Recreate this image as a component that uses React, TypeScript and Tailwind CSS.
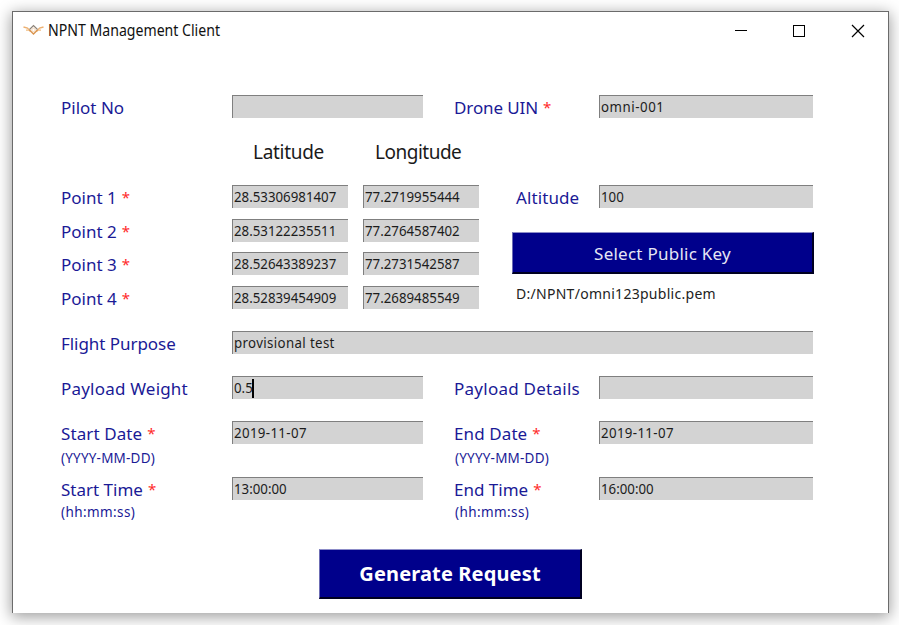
import React from "react";

function Label({ text, required, className = "" }: { text: string; required?: boolean; className?: string }) {
  return (
    <div className={`flex h-[23px] shrink-0 whitespace-pre pt-[2px] text-[17px] leading-[22px] text-[#1a1a96] ${className}`}>
      <span>{text}</span>
      {required && <span className="ml-[5px] mt-[-1px] text-[15px] text-[#ff2a2a]">*</span>}
    </div>
  );
}

function Field({ value, className = "", caret }: { value?: string; className?: string; caret?: boolean }) {
  return (
    <div
      className={`flex h-[23px] shrink-0 items-center border-l border-t border-[#7f7f7f] bg-[#d3d3d3] pb-[2px] pl-px text-[15px] leading-[20px] text-[#1c1c1c] ${className}`}
    >
      <span className="origin-left scale-x-[0.885] whitespace-pre">{value}</span>
      {caret && <span className="-ml-[3px] mt-[2px] h-[19px] w-[2px] bg-black" />}
    </div>
  );
}

function Hint({ text, className = "" }: { text: string; className?: string }) {
  return <div className={`shrink-0 whitespace-pre text-[13.5px] leading-[18px] text-[#1a1a96] ${className}`}>{text}</div>;
}

const points = [
  ["Point 1", "28.53306981407", "77.2719955444"],
  ["Point 2", "28.53122235511", "77.2764587402"],
  ["Point 3", "28.52643389237", "77.2731542587"],
  ["Point 4", "28.52839454909", "77.2689485549"],
];

export default function App() {
  return (
    <div className="h-[625px] w-[899px] overflow-hidden bg-white pl-[12px] pt-[11px] font-['Noto_Sans','Open_Sans',sans-serif]">
      <div className="flex h-[602px] w-[877px] flex-col border-x border-t border-[#6b6b6b] bg-white shadow-[0_3px_14px_1px_rgba(0,0,0,0.38)]">
        <header className="flex h-[37px] items-center">
          <svg className="ml-[10px] mt-[-2px] h-[12px] w-[21px]" viewBox="0 0 21 12" fill="none">
            <path d="M.5 3 L4.5 4 L7.5 7.5 M20.5 3 L16.5 4 L13.5 7.5" stroke="#edb070" strokeWidth="1.3" />
            <path d="M3 6.2 H6.5 M18 6.2 H14.5" stroke="#f0bd84" strokeWidth="1.2" />
            <path d="M6.5 5.5 L10.5 1.5 L14.5 5.5" stroke="#8d8378" strokeWidth="1.2" />
            <path d="M6.5 6 L10.5 10 L14.5 6" stroke="#d9934c" strokeWidth="1.3" />
            <path d="M10.5 3.8 L12.5 6 L10.5 8.2 L8.5 6 Z" stroke="#efc79c" strokeWidth="0.8" />
          </svg>
          <h1 className="ml-[4px] mt-[-1px] whitespace-pre text-[15.5px] font-normal leading-[20px] text-[#111]">
            <span className="inline-block origin-left scale-x-[0.91]">NPNT Management Client</span>
          </h1>
          <svg className="ml-auto mr-[23px] h-[14px] w-[132px]" viewBox="0 0 132 14" fill="none" stroke="#000" shapeRendering="crispEdges">
            <path d="M2 6.5 H14" />
            <rect x="60.5" y="1.5" width="11" height="11" />
            <path d="M119 1 L131 13 M131 1 L119 13" shapeRendering="auto" strokeWidth="1.2" />
          </svg>
        </header>

        <main className="flex flex-col pl-[48px]">
          <div className="mt-[46px] flex">
            <Label text="Pilot No" className="w-[171px]" />
            <Field className="w-[191px]" />
            <Label text="Drone UIN" required className="ml-[31px] w-[145px] tracking-[-0.1px]" />
            <Field value="omni-001" className="w-[214px] tracking-[0.6px]" />
          </div>

          <div className="mt-[21px] flex h-[26px] text-[19px] leading-[26px] text-[#1a1a1a]">
            <span className="ml-[192px] w-[122px] tracking-[-0.3px]">Latitude</span>
            <span className="tracking-[-0.5px]">Longitude</span>
          </div>

          <div className="mt-[20px] flex h-[124px]">
            <div className="flex w-[451px] flex-col justify-between">
              {points.map(([name, lat, lon]) => (
                <div key={name} className="flex">
                  <Label text={name} required className="w-[171px]" />
                  <Field value={lat} className="w-[116px]" />
                  <Field value={lon} className="ml-[15px] w-[116px]" />
                </div>
              ))}
            </div>
            <div className="flex flex-col">
              <div className="flex">
                <Label text="Altitude" className="ml-[4px] w-[83px] tracking-[0.1px]" />
                <Field value="100" className="w-[214px]" />
              </div>
              <button className="mt-[24px] h-[42px] w-[302px] border-b-2 border-l border-r-2 border-t border-b-[#000022] border-l-[#6c6cb4] border-r-[#000022] border-t-[#8c8cc8] bg-[#00008b] pt-[2px] text-[17px] tracking-[0.25px] text-[#e6e6f5]">
                Select Public Key
              </button>
              <span className="ml-[4px] mt-[11px] whitespace-pre text-[14px] leading-[18px] tracking-[0.28px] text-[#222]">D:/NPNT/omni123public.pem</span>
            </div>
          </div>

          <div className="mt-[22px] flex">
            <Label text="Flight Purpose" className="w-[171px] tracking-[-0.05px]" />
            <Field value="provisional test" className="w-[581px] tracking-[0.4px]" />
          </div>

          <div className="mt-[22px] flex">
            <Label text="Payload Weight" className="w-[171px] tracking-[0.2px]" />
            <Field value="0.5" caret className="w-[191px]" />
            <Label text="Payload Details" className="ml-[31px] w-[145px] tracking-[0.25px]" />
            <Field className="w-[214px]" />
          </div>

          <div className="mt-[22px] flex">
            <Label text="Start Date" required className="w-[171px] tracking-[0.1px]" />
            <Field value="2019-11-07" className="w-[191px] tracking-[0.4px]" />
            <Label text="End Date" required className="ml-[31px] w-[145px] tracking-[0.1px]" />
            <Field value="2019-11-07" className="w-[214px] tracking-[0.4px]" />
          </div>
          <div className="mt-[5px] flex">
            <Hint text="(YYYY-MM-DD)" className="w-[394px] tracking-[0.2px]" />
            <Hint text="(YYYY-MM-DD)" className="tracking-[0.2px]" />
          </div>

          <div className="mt-[10px] flex">
            <Label text="Start Time" required className="w-[171px]" />
            <Field value="13:00:00" className="w-[191px]" />
            <Label text="End Time" required className="ml-[31px] w-[145px]" />
            <Field value="16:00:00" className="w-[214px]" />
          </div>
          <div className="mt-[3px] flex">
            <Hint text="(hh:mm:ss)" className="w-[394px] tracking-[0.4px]" />
            <Hint text="(hh:mm:ss)" className="tracking-[0.4px]" />
          </div>

          <button className="ml-[258px] mt-[28px] h-[50px] w-[263px] border-b-2 border-l border-r-2 border-t border-b-[#000022] border-l-[#6c6cb4] border-r-[#000022] border-t-[#8c8cc8] bg-[#00008b] text-[20px] font-bold tracking-[0.15px] text-white">
            Generate Request
          </button>
        </main>
      </div>
    </div>
  );
}
